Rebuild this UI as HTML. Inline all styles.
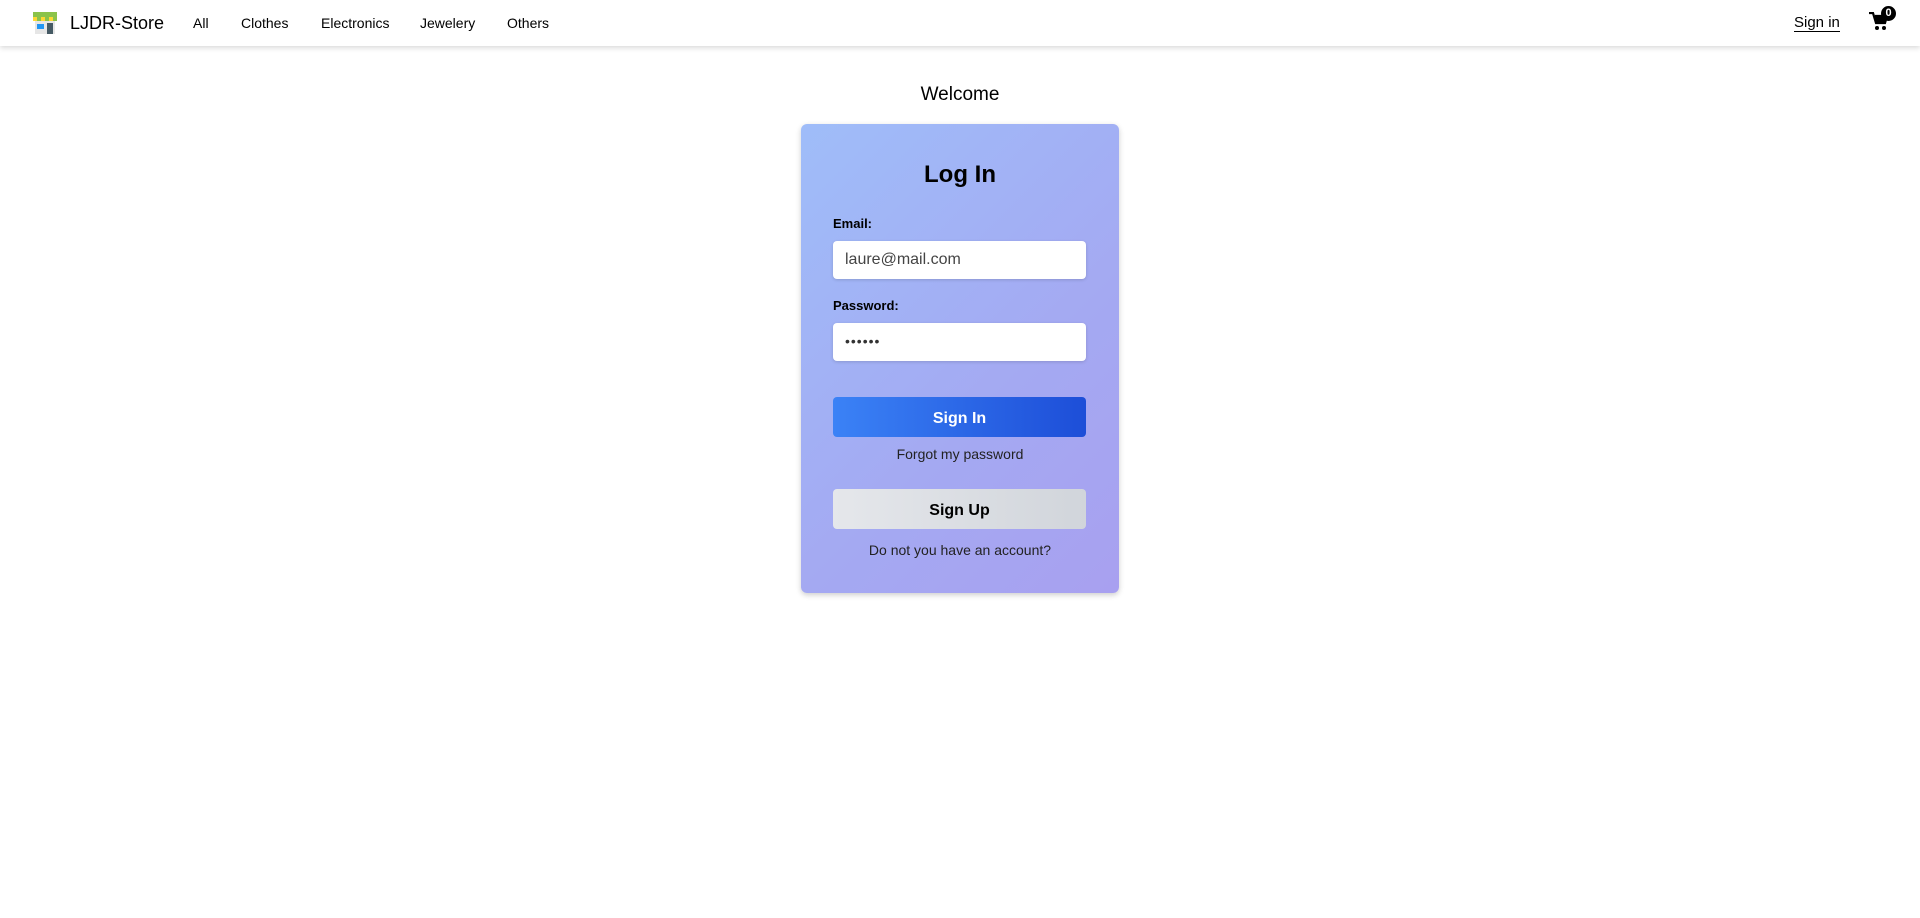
<!DOCTYPE html>
<html><head><meta charset="utf-8"><style>
*{box-sizing:border-box;margin:0;padding:0}
body{width:1920px;height:918px;background:#fff;font-family:"Liberation Sans","DejaVu Sans",sans-serif;color:#000;position:relative;overflow:hidden}
nav{position:absolute;left:0;top:0;width:1920px;height:46px;background:#fff;box-shadow:0 2px 5px rgba(0,0,0,.15)}
.t{position:absolute;white-space:nowrap}
.card{position:absolute;left:801px;top:124px;width:318px;height:469px;border-radius:6px;background:linear-gradient(135deg,#9fbdf9 0%,#a4a9f2 60%,#a8a0f0 100%);box-shadow:0 2px 6px rgba(0,0,0,.2)}
.inp{position:absolute;left:32px;width:253px;height:38px;background:#fff;border-radius:4px;box-shadow:0 1px 3px rgba(0,0,0,.15);font-size:16px;color:#444;padding:10px 0 0 12px}
.btn{position:absolute;left:32px;width:253px;height:40px;border-radius:4px;text-align:center;font-weight:bold;font-size:16px;line-height:43px}
.c{position:absolute;left:0;width:318px;text-align:center}
</style></head><body>
<nav>
<svg class="t" style="left:33px;top:12px" width="24" height="23" viewBox="0 0 24 23">
<rect x="2" y="7" width="20" height="15" fill="#e6e6e6"/>
<rect x="0" y="0" width="24" height="9" fill="#8bc34a"/>
<path d="M0 5h4v4h-4zM8 5h4v4h-4zM16 5h4v4h-4z" fill="#fdd835"/>
<rect x="4" y="12" width="7" height="5" fill="#2196f3"/>
<rect x="14" y="11" width="6" height="11" fill="#455a64"/>
</svg>
<div class="t" style="left:70px;top:13px;font-size:18px">LJDR-Store</div>
<div class="t" style="left:193px;top:15px;font-size:14px">All</div>
<div class="t" style="left:241px;top:15px;font-size:14px">Clothes</div>
<div class="t" style="left:321px;top:15px;font-size:14px">Electronics</div>
<div class="t" style="left:420px;top:15px;font-size:14px">Jewelery</div>
<div class="t" style="left:507px;top:15px;font-size:14px">Others</div>
<div class="t" style="left:1794px;top:14px;font-size:15px;border-bottom:1.5px solid #000;line-height:17px">Sign in</div>
<svg class="t" style="left:1869px;top:12px" width="20" height="19" viewBox="0 0 20 19">
<path d="M0 1h4l3 10h9l2-7H6" fill="none" stroke="#000" stroke-width="2.2"/>
<path d="M6 4h12l-2 7H7z" fill="#000"/>
<circle cx="8" cy="16" r="2" fill="#000"/><circle cx="15" cy="16" r="2" fill="#000"/>
</svg>
<div class="t" style="left:1881px;top:6px;width:15px;height:15px;border-radius:50%;background:#000;color:#fff;font-size:11px;font-weight:bold;text-align:center;line-height:15px">0</div>
</nav>
<div class="t" style="left:0;width:1920px;text-align:center;top:84px;font-size:19px">Welcome</div>
<div class="card">
<div class="c" style="top:37px;font-size:24px;font-weight:bold">Log In</div>
<div class="t" style="left:32px;top:92px;font-size:13px;font-weight:bold">Email:</div>
<div class="inp" style="top:117px">laure@mail.com</div>
<div class="t" style="left:32px;top:174px;font-size:13px;font-weight:bold">Password:</div>
<div class="inp" style="top:199px;font-size:14px;letter-spacing:1px;color:#333">••••••</div>
<div class="btn" style="top:273px;color:#fff;background:linear-gradient(90deg,#3b82f6,#1d4ed8)">Sign In</div>
<div class="c" style="top:322px;font-size:14px;color:#222">Forgot my password</div>
<div class="btn" style="top:365px;background:linear-gradient(90deg,#e5e7eb,#d1d5db)">Sign Up</div>
<div class="c" style="top:418px;font-size:14px;color:#222">Do not you have an account?</div>
</div>
</body></html>
